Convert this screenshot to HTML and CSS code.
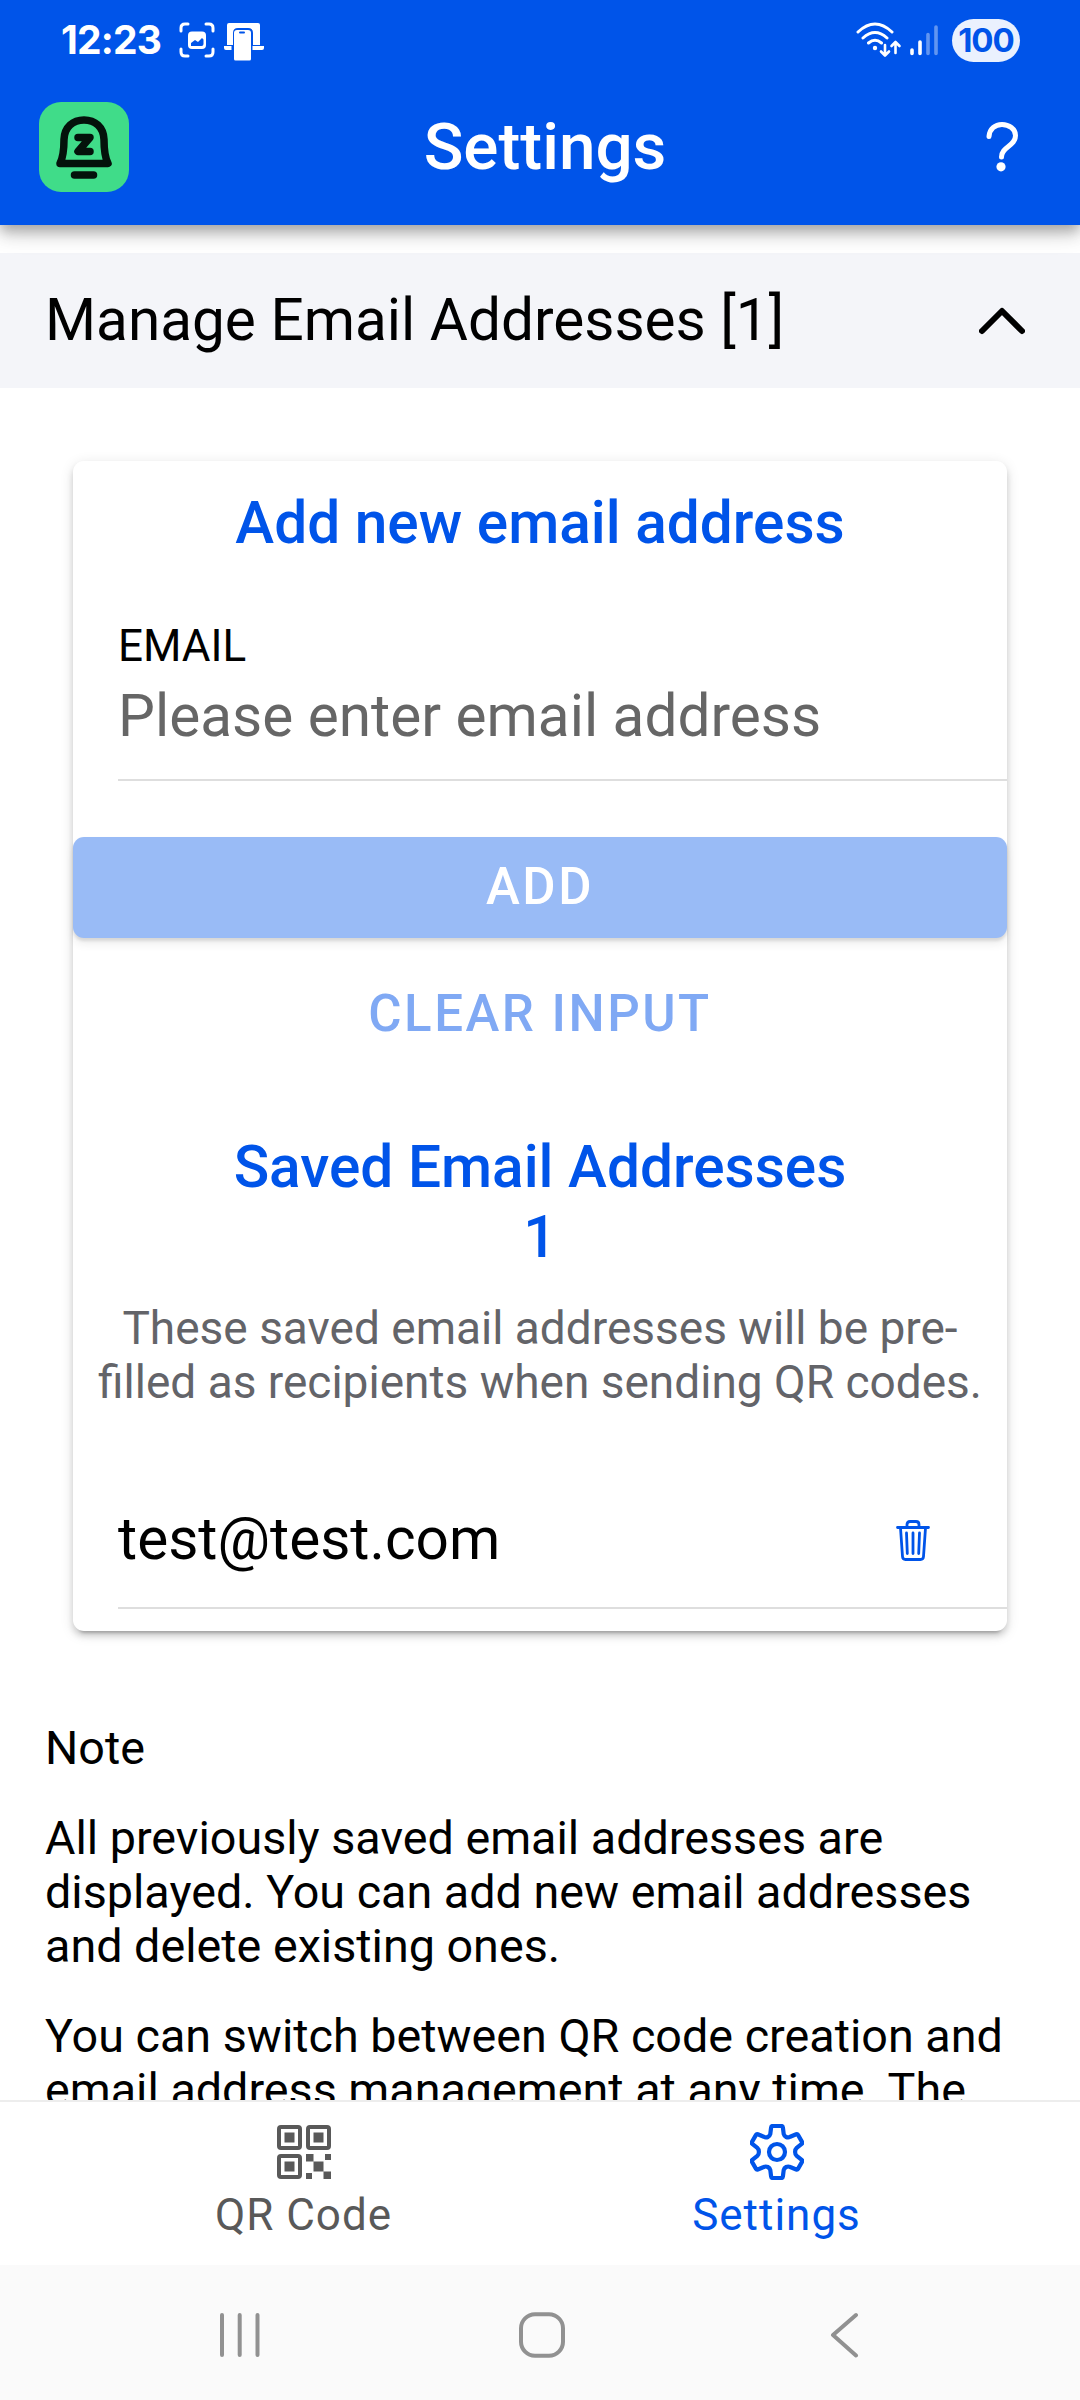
FILE: index.html
```html
<!DOCTYPE html>
<html lang="en">
<head>
<meta charset="utf-8">
<title>Settings</title>
<link rel="stylesheet" href="styles.css">
</head>
<body>
<div class="app">
  <header class="header">
    <div class="status">
      <span class="clock">12:23</span>
      <svg class="capture" viewBox="0 0 36 36"><g fill="none" stroke="#fff" stroke-width="3" stroke-linecap="round"><path d="M2 9V6q0-4 4-4h3M27 2h3q4 0 4 4v3M34 27v3q0 4-4 4h-3M9 34H6q-4 0-4-4v-3"/></g><rect x="9" y="9.500" width="18" height="17.500" rx="4" fill="#fff"/><path d="M12 24v-3l4-3 3 2 4-4 1.500 1.500V22q0 2-2 2z" fill="#0054e9"/></svg>
      <svg class="link" viewBox="0 0 40 38"><path d="M3 2q0-2 2-2h29q2 0 2 2v20h-7V10q0-5-5-5H14q-5 0-5 5v12H3z" fill="#fff"/><path d="M0 23h7.500v4H2q-2 0-2-2zM28.500 23H40v2q0 2-2 2h-9.500z" fill="#fff"/><path d="M10 10q0-3 3-3h11q3 0 3 3v26q0 1.500-1.500 1.500h-14Q10 37.500 10 36z" fill="#fff"/><rect x="15" y="8.500" width="6" height="2" rx="1" fill="#0054e9"/></svg>
      <span class="spacer"></span>
      <svg class="wifi" viewBox="0 0 46 36"><g fill="none" stroke="#fff" stroke-width="3" stroke-linecap="round" stroke-linejoin="round"><path d="M2 10Q19-6 36 10M7 16q12-11 24 0M12.500 21q6.500-5.500 13 0"/><path d="M29 23v10M25 29.500l4 4 4-4M39.500 31V20.500M35.500 24l4-4 4 4" stroke-width="2.600"/></g><circle cx="19" cy="26" r="2.200" fill="#fff"/></svg>
      <svg class="signal" viewBox="0 0 28 31"><g stroke-width="3.600" stroke-linecap="round" stroke="#fff"><path d="M2 25v3.500M10 17v11.500"/><path d="M18 9.500v19M26 2v26.500" opacity=".38"/></g></svg>
      <span class="battery">100</span>
    </div>
    <div class="toolbar">
      <svg class="logo" viewBox="0 0 90 90"><rect width="90" height="90" rx="22" fill="#40dc89"/><g fill="none" stroke="#04120b" stroke-width="7.500" stroke-linejoin="round" stroke-linecap="round"><path d="M21 61.500q4-8 4-24C25.500 25 34 18 45 18s19.500 7 20 19.500q0 16 4 24z"/><path d="M35.500 73h19"/><path d="M39 35.500h12L39 49.500h12"/></g></svg>
      <h1 class="title">Settings</h1>
      <svg class="help" viewBox="0 0 32 50"><path d="M3 14.500C3.500 7 9 2.500 16 2.500S29.500 7 29.500 13.500c0 11-14 11-14 21.500" fill="none" stroke="#fff" stroke-width="5" stroke-linecap="round"/><circle cx="15" cy="44.800" r="4.600" fill="#fff"/></svg>
    </div>
  </header>

  <main class="content">
    <div class="accordion">
      <span>Manage Email Addresses [1]</span>
      <svg class="chevron" viewBox="0 0 46 28"><path d="M3 24L23 4l20 20" fill="none" stroke="#000" stroke-width="6" stroke-linecap="round" stroke-linejoin="round"/></svg>
    </div>
    <section class="card">
      <h2 class="heading">Add new email address</h2>
      <div class="field">
        <label class="label">EMAIL</label>
        <div class="placeholder">Please enter email address</div>
      </div>
      <div class="btn add"><span>ADD</span></div>
      <div class="btn clear"><span>CLEAR INPUT</span></div>
      <h2 class="heading saved">Saved Email Addresses<br>1</h2>
      <p class="hint">These saved email addresses will be pre-<br>filled as recipients when sending QR codes.</p>
      <div class="row">
        <span class="address">test@test.com</span>
        <svg class="trash" viewBox="0 0 34 41"><g fill="none" stroke="#0054e9" stroke-width="2.800" stroke-linecap="round" stroke-linejoin="round"><path d="M1.500 7.500h31M4.500 8l2 28.500q.2 3 3 3h15q2.800 0 3-3L29.500 8M11 7V4.500q0-3 3-3h6q3 0 3 3V7M17 13v20.500M10.500 13l.8 20.500M23.500 13l-.8 20.500"/></g></svg>
      </div>
    </section>
    <div class="notes">
      <p>Note</p>
      <p>All previously saved email addresses are<br>displayed. You can add new email addresses<br>and delete existing ones.</p>
      <p>You can switch between QR code creation and<br>email address management at any time. The</p>
    </div>
  </main>

  <nav class="tabs">
    <div class="tab">
      <svg class="tab-icon" viewBox="0 0 54 56"><g fill="none" stroke="#595959" stroke-width="4"><rect x="2" y="3" width="21" height="21" rx="2"/><rect x="31" y="3" width="21" height="21" rx="2"/><rect x="2" y="32" width="21" height="21" rx="2"/></g><path fill="#595959" d="M7.500 8.500h10v10h-10zM36.500 8.500h10v10h-10zM7.500 37.500h10v10h-10zM29 30h7.500v7.500H29zM48 30h6v6h-6zM36.500 37.500h10v10h-10zM29 49h6v6h-6zM46.500 47.500H54V55h-7.500z"/></svg>
      <span>QR Code</span>
    </div>
    <div class="tab active">
      <svg class="tab-icon" viewBox="0 0 54 56"><g fill="none" stroke="#0054e9" stroke-width="4.200" stroke-linejoin="round"><circle cx="27" cy="28" r="8"/><path d="M22.500 2h9q1.200 0 1.400 1.500l.8 6.500q.5 2 2.500 3t4-.2l6-2.500q1.200-.4 1.800.6l4 7q.7 1.200-.3 2l-5 4q-1.600 1.400-1.600 4t1.600 4l5 4q1 .8.300 2l-4 7q-.6 1-1.800.6l-6-2.500q-2-1-4 0t-2.500 3l-.8 6.500q-.2 1.500-1.400 1.500h-9q-1.200 0-1.400-1.500l-.8-6.500q-.5-2-2.500-3t-4 0l-6 2.500q-1.200.4-1.800-.6l-4-7q-.7-1.200.3-2l5-4q1.600-1.400 1.600-4t-1.600-4l-5-4q-1-.8-.3-2l4-7q.6-1 1.800-.6l6 2.500q2 1.200 4 .2t2.500-3l.8-6.500Q21.300 2 22.500 2z"/></g></svg>
      <span>Settings</span>
    </div>
  </nav>

  <footer class="sysnav">
    <svg viewBox="0 0 46 46"><path d="M5 3v40M22.700 3v40M40.500 3v40" stroke="#919191" stroke-width="4" stroke-linecap="round"/></svg>
    <svg viewBox="0 0 46 46"><rect x="2" y="2.200" width="42" height="41.600" rx="14" fill="none" stroke="#919191" stroke-width="4"/></svg>
    <svg viewBox="0 0 46 46"><path d="M35 3L12 23l23 20.500" fill="none" stroke="#919191" stroke-width="4" stroke-linecap="round" stroke-linejoin="round"/></svg>
  </footer>
</div>
</body>
</html>
```
FILE: styles.css
```css
* { box-sizing: border-box; }
body { margin: 0; background: #fff; font-family: Roboto, "Liberation Sans", sans-serif; color: #000; }
h1, h2, p { margin: 0; }
svg { display: block; flex: none; }
.app { width: 1080px; height: 2400px; display: flex; flex-direction: column; overflow: hidden; }

.header { position: relative; z-index: 1; height: 225px; flex: none; background: #0054e9; color: #fff; box-shadow: 0 5px 11px -1px rgba(0,0,0,.2), 0 11px 14px rgba(0,0,0,.14), 0 3px 28px rgba(0,0,0,.12); }
.status { height: 80px; padding: 0 60px 0 61px; display: flex; align-items: center; }
.clock { width: 100px; font: 700 39px/40px Inter, sans-serif; letter-spacing: -.8px; white-space: nowrap; }
.capture { width: 36px; height: 36px; margin-left: 18px; }
.link { width: 40px; height: 38px; margin: 4px 0 0 9px; }
.spacer { flex: 1; }
.wifi { width: 46px; height: 36px; margin-right: 8px; }
.signal { width: 28px; height: 31px; margin-right: 14px; }
.battery { width: 68px; height: 43px; border-radius: 22px; background: #eaf1fe; color: #0054e9; font: 700 33px/43px Inter, sans-serif; text-align: center; letter-spacing: -1px; }
.toolbar { height: 133px; padding: 0 62px 0 39px; display: grid; grid-template-columns: 90px 1fr 32px; align-items: center; }
.logo { width: 90px; height: 90px; }
.title { padding: 1px 51px 0 26px; text-align: center; font-size: 65.600px; font-weight: 500; line-height: 76px; }
.help { width: 32px; height: 50px; }

.content { flex: 1; min-height: 0; overflow: hidden; padding-top: 28px; }
.accordion { height: 135px; padding: 0 55px 2px 45px; background: #f4f5f9; display: flex; align-items: center; justify-content: space-between; font-size: 58.500px; }
.chevron { width: 46px; height: 28px; margin-top: 2px; }
.card { height: 1170px; margin: 73px 73px 0; border-radius: 11px; box-shadow: 0 8px 3px -6px rgba(0,0,0,.2), 0 5px 6px rgba(0,0,0,.14), 0 3px 14px rgba(0,0,0,.12); display: flex; flex-direction: column; }
.heading { margin-top: 27px; color: #0054e9; text-align: center; font-size: 58.600px; font-weight: 500; line-height: 70px; }
.field { margin: 53px 0 0 45px; height: 170px; border-bottom: 2px solid #dedede; }
.label { display: block; font-size: 44px; line-height: 70px; }
.placeholder { font-size: 58.500px; line-height: 70px; color: #666; }
.btn { height: 101px; padding-bottom: 2px; display: flex; align-items: center; justify-content: center; font-size: 51px; font-weight: 500; letter-spacing: 2.500px; }
.add { margin-top: 56px; border-radius: 11px; background: #99bbf6; color: #fff; box-shadow: 0 3px 3px rgba(0,0,0,.1), 0 6px 10px rgba(0,0,0,.07); }
.clear { margin-top: 26px; color: #80a9f4; }
.saved { margin-top: 67px; }
.hint { margin-top: 29px; text-align: center; color: #636469; font-size: 46px; line-height: 54px; white-space: nowrap; }
.row { margin: 65px 0 0 45px; height: 135px; padding-right: 77px; border-bottom: 2px solid #dedede; display: flex; align-items: center; justify-content: space-between; font-size: 58.500px; }
.address { padding-bottom: 3px; }
.trash { width: 34px; height: 41px; margin-bottom: 1px; }
.notes { margin: 90px 45px 0; font-size: 46.700px; line-height: 54px; white-space: nowrap; display: flex; flex-direction: column; gap: 36px; }

.tabs { height: 165px; flex: none; border-top: 2px solid #ededed; background: #fff; padding: 0 67px; display: flex; color: #595959; }
.tab { flex: 1; display: flex; flex-direction: column; align-items: center; padding-top: 22px; font-size: 44px; line-height: 54px; letter-spacing: 1px; }
.tab-icon { width: 54px; height: 56px; margin-bottom: 8px; }
.active { color: #0054e9; }
.sysnav { height: 135px; flex: none; background: #fafafa; display: flex; justify-content: space-between; padding: 47px 213px 0 217px; }
.sysnav svg { width: 46px; height: 46px; }
```
